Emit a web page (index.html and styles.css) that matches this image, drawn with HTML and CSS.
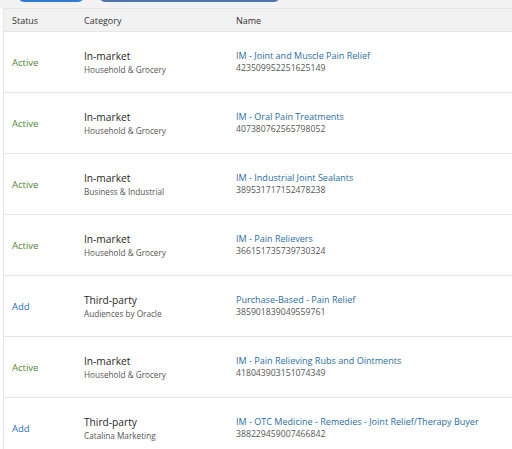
FILE: index.html
```html
<!DOCTYPE html>
<html>
<head>
<meta charset="utf-8">
<link rel="stylesheet" href="styles.css">
</head>
<body>
<div class="toolbar">
  <div class="btn btn-primary"></div>
  <div class="btn btn-secondary"></div>
</div>
<div class="table">
  <div class="row head">
    <div class="cell">Status</div>
    <div class="cell">Category</div>
    <div class="cell">Name</div>
  </div>
  <div class="row">
    <div class="cell status active">Active</div>
    <div class="cell cat"><div class="cat-main">In-market</div><div class="cat-sub">Household &amp; Grocery</div></div>
    <div class="cell name"><div class="name-main">IM - Joint and Muscle Pain Relief</div><div class="name-id">423509952251625149</div></div>
  </div>
  <div class="row">
    <div class="cell status active">Active</div>
    <div class="cell cat"><div class="cat-main">In-market</div><div class="cat-sub">Household &amp; Grocery</div></div>
    <div class="cell name"><div class="name-main">IM - Oral Pain Treatments</div><div class="name-id">407380762565798052</div></div>
  </div>
  <div class="row">
    <div class="cell status active">Active</div>
    <div class="cell cat"><div class="cat-main">In-market</div><div class="cat-sub">Business &amp; Industrial</div></div>
    <div class="cell name"><div class="name-main">IM - Industrial Joint Sealants</div><div class="name-id">389531717152478238</div></div>
  </div>
  <div class="row">
    <div class="cell status active">Active</div>
    <div class="cell cat"><div class="cat-main">In-market</div><div class="cat-sub">Household &amp; Grocery</div></div>
    <div class="cell name"><div class="name-main">IM - Pain Relievers</div><div class="name-id">366151735739730324</div></div>
  </div>
  <div class="row">
    <div class="cell status add">Add</div>
    <div class="cell cat"><div class="cat-main">Third-party</div><div class="cat-sub">Audiences by Oracle</div></div>
    <div class="cell name"><div class="name-main">Purchase-Based - Pain Relief</div><div class="name-id">385901839049559761</div></div>
  </div>
  <div class="row">
    <div class="cell status active">Active</div>
    <div class="cell cat"><div class="cat-main">In-market</div><div class="cat-sub">Household &amp; Grocery</div></div>
    <div class="cell name"><div class="name-main">IM - Pain Relieving Rubs and Ointments</div><div class="name-id">418043903151074349</div></div>
  </div>
  <div class="row">
    <div class="cell status add">Add</div>
    <div class="cell cat"><div class="cat-main">Third-party</div><div class="cat-sub">Catalina Marketing</div></div>
    <div class="cell name"><div class="name-main">IM - OTC Medicine - Remedies - Joint Relief/Therapy Buyer</div><div class="name-id">388229459007466842</div></div>
  </div>
</div>
</body>
</html>
```

FILE: styles.css
```css
html, body {
  margin: 0;
  padding: 0;
  background: #ffffff;
  font-family: "Open Sans", "Noto Sans", sans-serif;
  overflow: hidden;
}

.toolbar {
  height: 8px;
  background: #f2f2f2;
  display: flex;
  align-items: flex-start;
  gap: 15px;
  padding-left: 18px;
  overflow: hidden;
}

.btn {
  margin-top: -18px;
  height: 20px;
  box-sizing: border-box;
  border-radius: 6px;
}

.btn-primary {
  width: 66px;
  border: 2px solid #2f7bd9;
  background: #ffffff;
}

.btn-secondary {
  width: 181px;
  border: 1px solid #4f74b0;
  border-bottom-width: 2px;
  background: #dfe6f2;
}

.table {
  margin-left: 3px;
  border-left: 1px solid #e4e4e4;
  border-top: 1px solid #e6e6e6;
}

.row {
  display: grid;
  grid-template-columns: 72px 152px 1fr;
  padding-left: 8px;
  height: 60px;
  align-items: center;
  border-bottom: 1px solid #e6e6e6;
}

.row.head {
  height: 21px;
  padding-top: 1px;
  background: #f2f2f2;
  font-size: 9px;
  color: #333333;
}

.status {
  font-size: 9.5px;
  padding-top: 1px;
}

.active {
  color: #4d8a35;
}

.add {
  color: #1f6fc5;
}

.cat-main {
  font-size: 10.2px;
  line-height: 13px;
  padding-top: 1px;
  color: #1f1f1f;
}

.cat-sub {
  font-size: 8.2px;
  line-height: 13px;
  color: #555555;
}

.name-main {
  font-size: 9.05px;
  line-height: 12px;
  color: #2b6e9e;
}

.name-id {
  font-size: 8.7px;
  line-height: 12px;
  color: #555555;
}
```
